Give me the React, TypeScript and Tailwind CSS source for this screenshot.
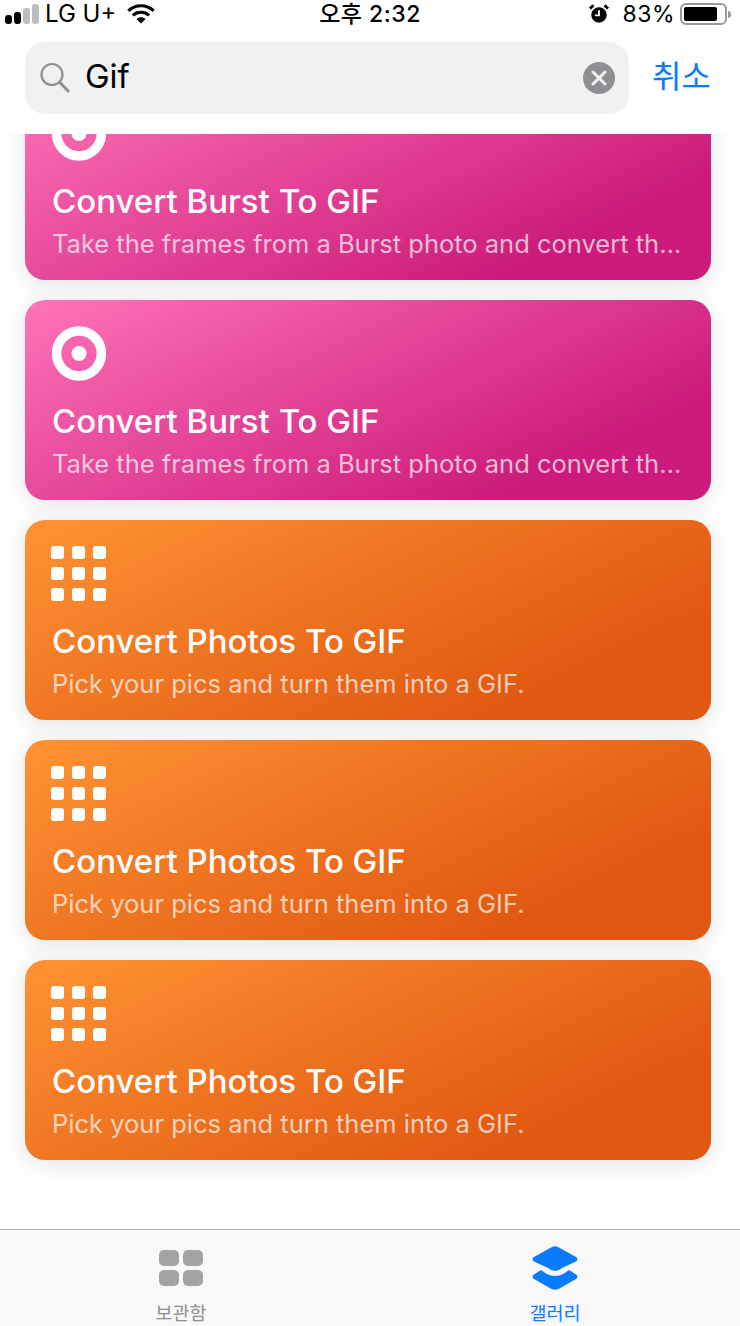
const sans = "font-['Inter','Noto_Sans_CJK_KR',sans-serif]";

const cards = [
  { kind: "burst", title: "Convert Burst To GIF", desc: "Take the frames from a Burst photo and convert them into an animated GIF." },
  { kind: "burst", title: "Convert Burst To GIF", desc: "Take the frames from a Burst photo and convert them into an animated GIF." },
  { kind: "grid", title: "Convert Photos To GIF", desc: "Pick your pics and turn them into a GIF." },
  { kind: "grid", title: "Convert Photos To GIF", desc: "Pick your pics and turn them into a GIF." },
  { kind: "grid", title: "Convert Photos To GIF", desc: "Pick your pics and turn them into a GIF." },
];

function TargetIcon() {
  return (
    <svg width="54" height="55" viewBox="0 0 54 55">
      <circle cx="27" cy="27.500" r="22.400" fill="none" stroke="white" strokeWidth="9.500" />
      <circle cx="27" cy="27.500" r="7.500" fill="white" />
    </svg>
  );
}

function GridIcon() {
  return (
    <div className="-ml-px grid h-[55px] w-[55px] grid-cols-3 gap-[8.500px]">
      {Array.from({ length: 9 }).map((_, i) => (
        <div key={i} className="rounded-[3px] bg-white" />
      ))}
    </div>
  );
}

function StatusBar() {
  return (
    <div className="flex h-[28px] items-center justify-between text-[23px] leading-none text-black">
      <div className="flex w-[200px] items-center pl-[5px]">
        <div className="flex items-end gap-[2px]">
          <div className="h-[9px] w-[7px] rounded-[3px] bg-black" />
          <div className="h-[12px] w-[7px] rounded-[3px] bg-black" />
          <div className="h-[16px] w-[7px] rounded-[3px] bg-[#bdbdbd]" />
          <div className="h-[20px] w-[7px] rounded-[3px] bg-[#bdbdbd]" />
        </div>
        <span className="ml-[6px] text-[24px]">LG U+</span>
        <svg className="ml-[11px]" width="28" height="20" viewBox="0 0 30 22">
          <path d="M1 7.500C9 0 21 0 29 7.500" fill="none" stroke="black" strokeWidth="3.400" />
          <path d="M6 12.500C11 8 19 8 24 12.500" fill="none" stroke="black" strokeWidth="3.400" />
          <path d="M10 16.500C13 14 17 14 20 16.500L15 21.500Z" fill="black" />
        </svg>
      </div>
      <span className="font-medium tracking-[0.5px]">오후 2:32</span>
      <div className="flex w-[200px] items-center justify-end pr-[9px]">
        <svg width="20" height="20" viewBox="0 0 22 22">
          <circle cx="11" cy="12" r="8.500" fill="black" />
          <path d="M1 5L5 1.500M21 5L17 1.500" stroke="black" strokeWidth="3" />
          <path d="M11 7V12.500H6.500" fill="none" stroke="white" strokeWidth="2" />
        </svg>
        <span className="ml-[13px] text-[23px] tracking-[0.5px]">83%</span>
        <div className="ml-[5px] h-[22px] w-[47px] rounded-[6px] border-2 border-[#9a9a9a] p-[2px]">
          <div className="h-full w-[33px] rounded-[2px] bg-black" />
        </div>
        <div className="ml-[1px] h-[7px] w-[3px] rounded-r-full bg-[#9a9a9a]" />
      </div>
    </div>
  );
}

function SearchBar() {
  return (
    <div className="mt-[14px] flex items-center pl-[25px]">
      <div className="flex h-[72px] w-[604px] items-center rounded-[20px] bg-[#f1f1f1] pl-[15px] pr-[14px]">
        <svg width="30" height="32" viewBox="0 0 30 32" fill="none" stroke="#8e8e93" strokeWidth="2.200">
          <circle cx="12" cy="12.500" r="10.500" />
          <path d="M19.500 20L28 29" strokeWidth="3" strokeLinecap="round" />
        </svg>
        <span className="mb-[3px] ml-[15px] flex-1 text-[33px] leading-none text-black">Gif</span>
        <div className="flex h-8 w-8 items-center justify-center rounded-full bg-[#8e8e93]">
          <svg width="16" height="16" viewBox="0 0 16 16">
            <path d="M2 2L14 14M14 2L2 14" stroke="#f1f1f1" strokeWidth="3" strokeLinecap="round" />
          </svg>
        </div>
      </div>
      <span className="mb-[3px] ml-[23px] text-[32px] leading-none text-[#0a7aff]">취소</span>
    </div>
  );
}

function LibraryIcon() {
  return (
    <div className="grid h-[36px] w-[44px] grid-cols-2 gap-[4px]">
      {[0, 1, 2, 3].map((i) => (
        <div key={i} className="rounded-[5px] bg-[#a3a3a3]" />
      ))}
    </div>
  );
}

function GalleryIcon() {
  return (
    <svg width="46" height="44" viewBox="0 0 46 44" fill="#0a7aff">
      <path d="M19.500 1.200Q23 -0.800 26.500 1.200L44 11Q47 13 44 15.500L30 22Q23 28 16 22L2 15.500Q-1 13 2 11Z" />
      <path d="M9 24L14 27.500Q23 32.500 32 27.500L37 24L44 28.500Q47 30.500 44 33L27 42.800Q23 44.500 19 42.800L2 33Q-1 30.500 2 28.500Z" />
    </svg>
  );
}

function TabBar() {
  return (
    <div className="flex h-[97px] shrink-0 border-t border-[#b2b2b2] bg-[#f8f8f8] pt-[16px]">
      <div className="flex flex-1 flex-col items-center pr-[12px]">
        <div className="flex h-[44px] items-center">
          <LibraryIcon />
        </div>
        <span className="mt-[11px] text-[18.500px] leading-[24px] text-[#8e8e93]">보관함</span>
      </div>
      <div className="flex flex-1 flex-col items-center pr-[4px]">
        <div className="flex h-[44px] items-center">
          <GalleryIcon />
        </div>
        <span className="mt-[11px] text-[18.500px] leading-[24px] text-[#0a7aff]">갤러리</span>
      </div>
    </div>
  );
}

export default function App() {
  return (
    <div className={`flex h-[1326px] w-[740px] flex-col overflow-hidden bg-white ${sans}`}>
      <div className="relative z-10 h-[134px] shrink-0 bg-white">
        <StatusBar />
        <SearchBar />
      </div>
      <div className="flex-1 overflow-hidden pl-[25px] pr-[29px]">
        <div className="-mt-[54px] flex flex-col gap-5">
          {cards.map((card, i) => (
            <div
              key={i}
              className={`flex h-[200px] flex-col rounded-[20px] px-[27px] pt-[26px] shadow-[0_4px_24px_rgba(60,30,30,0.13)] ${
                card.kind === "burst"
                  ? "bg-[linear-gradient(154deg,#ff74b8_0%,#cc1b7a_80%)]"
                  : "bg-[linear-gradient(154deg,#ff9333_0%,#e05811_80%)]"
              }`}
            >
              {card.kind === "burst" ? <TargetIcon /> : <GridIcon />}
              <div className="mt-[20px] text-[33px] font-[550] leading-[40px] text-white">{card.title}</div>
              <div className="mt-[3px] truncate text-[25.500px] leading-[40px] text-white/70">{card.desc}</div>
            </div>
          ))}
        </div>
      </div>
      <TabBar />
    </div>
  );
}
